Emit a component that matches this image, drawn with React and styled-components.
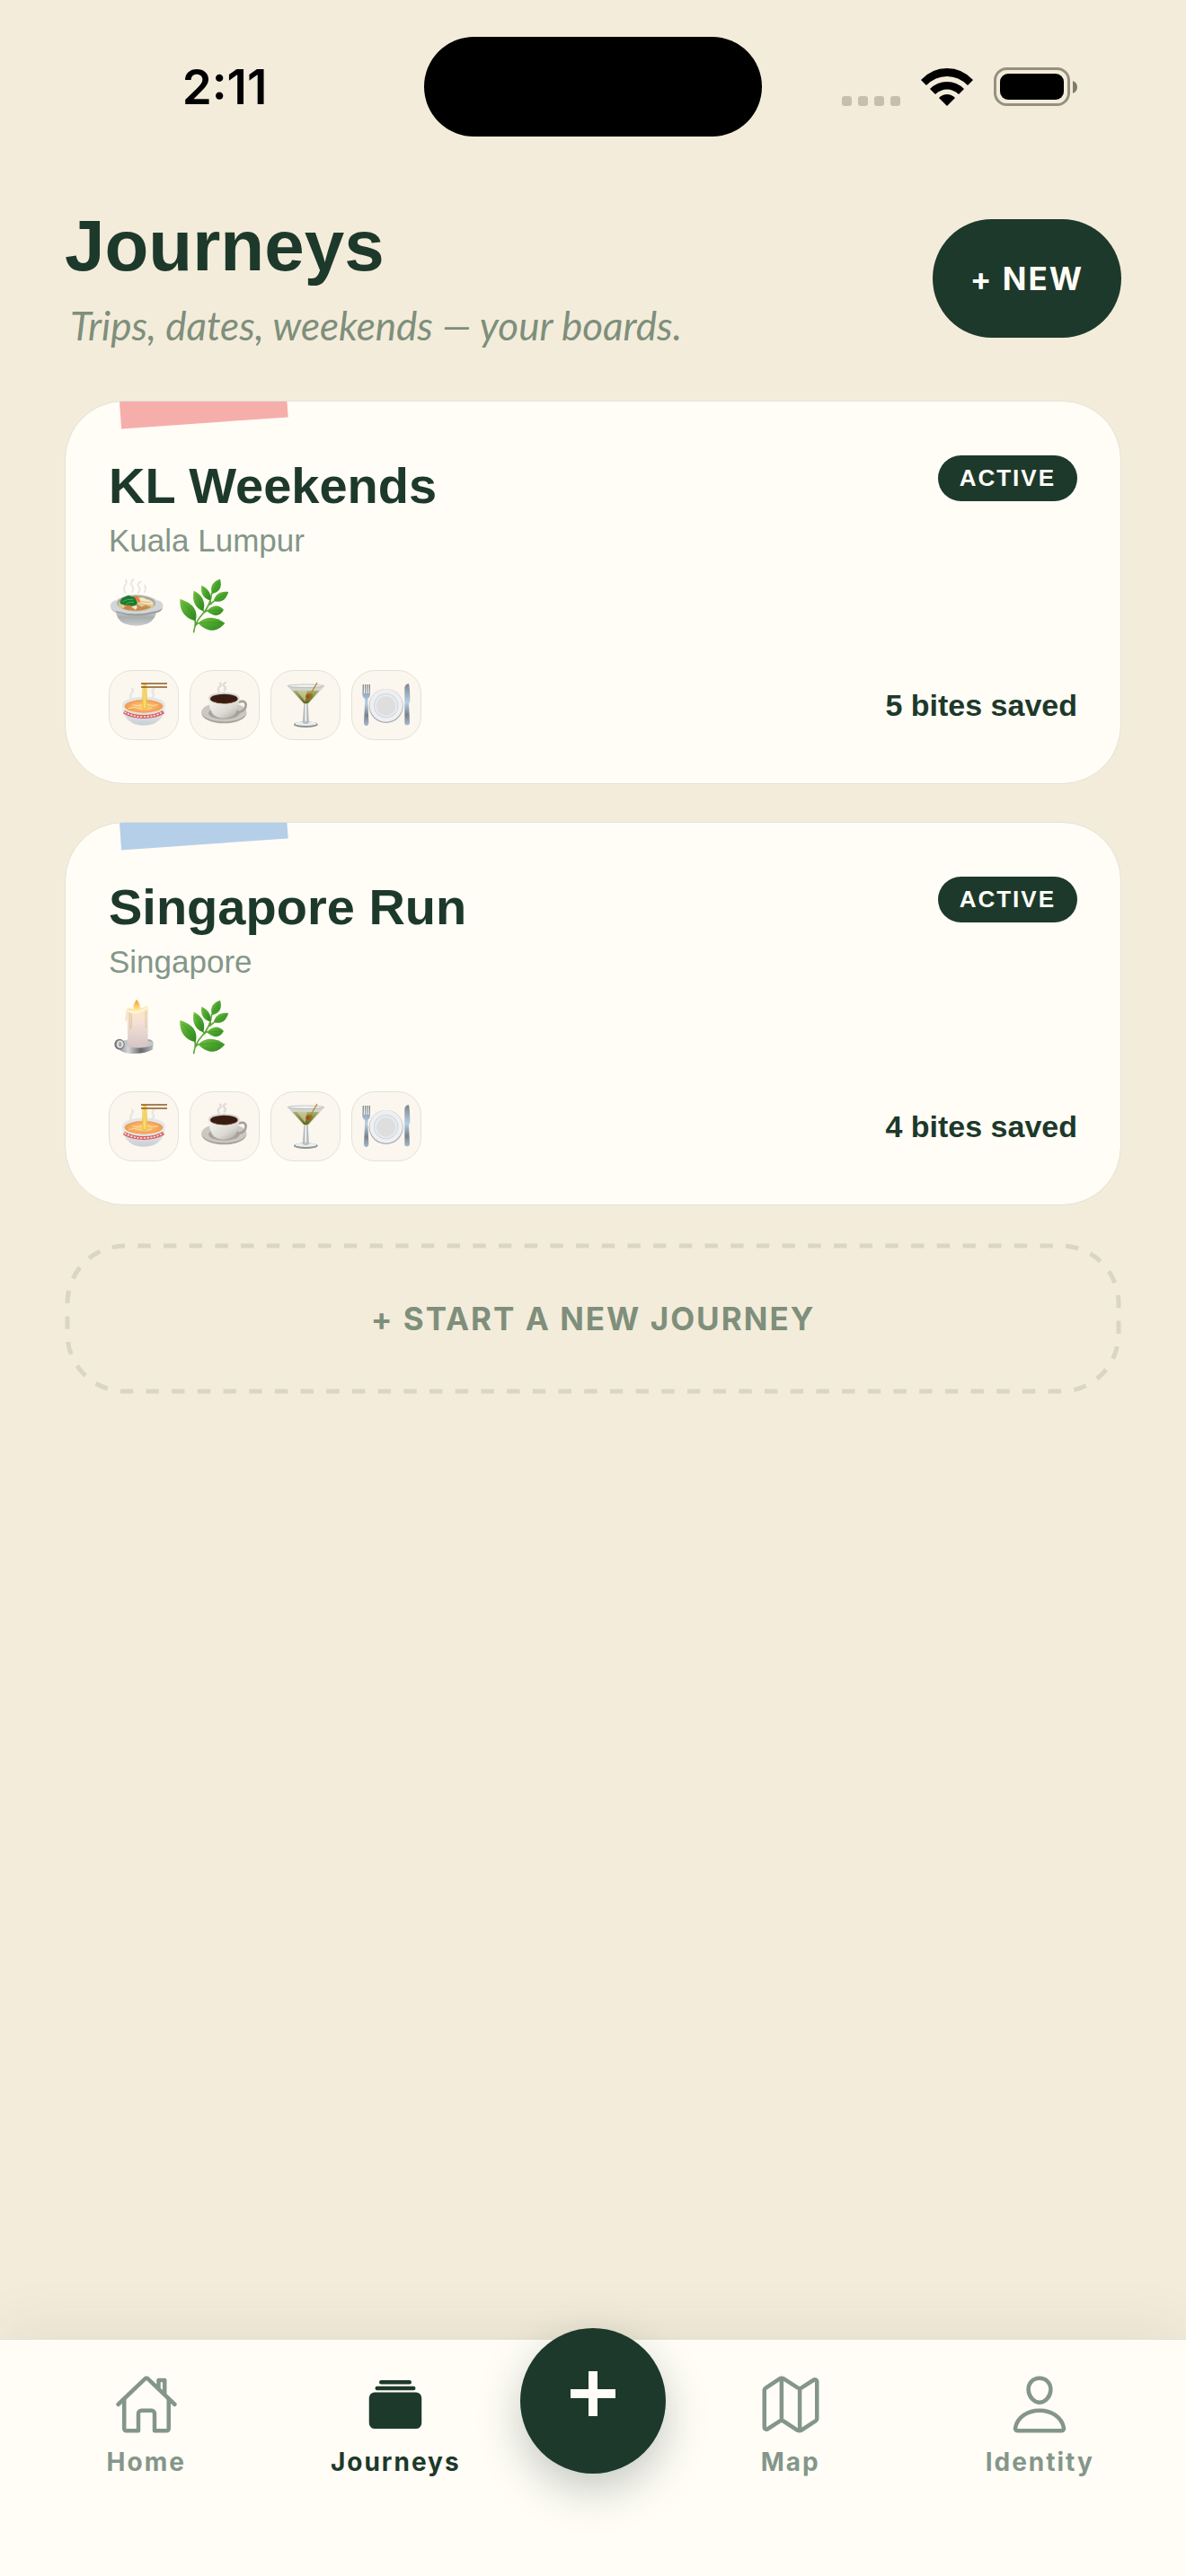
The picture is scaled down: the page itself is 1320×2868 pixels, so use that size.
import React from "react";
import styled, { createGlobalStyle } from "styled-components";
import {
  IoAlbums,
  IoHomeOutline,
  IoMapOutline,
  IoPersonOutline,
} from "react-icons/io5";

const colors = {
  page: "#f4ecda",
  card: "#fffdf6",
  tile: "#fbf7ee",
  line: "#e0e3d8",
  dash: "#d9d6c2",
  green: "#1d392b",
  sage: "#7e8f7c",
  muted: "#84968a",
  pink: "#f6aeab",
  blue: "#b5cfe9",
};

const journeys = [
  {
    title: "KL Weekends",
    place: "Kuala Lumpur",
    tape: colors.pink,
    vibes: ["pot", "herb"],
    bites: 5,
  },
  {
    title: "Singapore Run",
    place: "Singapore",
    tape: colors.blue,
    vibes: ["candle", "herb"],
    bites: 4,
  },
];

const tiles = ["ramen", "coffee", "cocktail", "plate"];

const App = () => {
  return (
    <Screen>
      <GlobalStyle />
      <Gradients />
      <StatusBar />
      <Main>
        <Header>
          <div>
            <Title>Journeys</Title>
            <Tagline>Trips, dates, weekends — your boards.</Tagline>
          </div>
          <NewButton type="button">+ NEW</NewButton>
        </Header>
        <Boards>
          {journeys.map((journey) => (
            <JourneyCard key={journey.title} {...journey} />
          ))}
          <StartButton type="button">
            <DashedFrame aria-hidden="true">
              <rect
                width="100%"
                height="100%"
                rx="64"
                pathLength="178"
                strokeDasharray="1 1"
                strokeDashoffset="-1"
              />
            </DashedFrame>
            + START A NEW JOURNEY
          </StartButton>
        </Boards>
      </Main>
      <TabBar>
        <Tab href="#home">
          <IoHomeOutline />
          Home
        </Tab>
        <Tab href="#journeys" $active aria-current="page">
          <IoAlbums />
          Journeys
        </Tab>
        <AddButton type="button" aria-label="Add">
          <svg width="50" height="50" viewBox="0 0 50 50">
            <path d="M25 0v50M0 25h50" stroke="#fffdf6" strokeWidth="10" />
          </svg>
        </AddButton>
        <Tab href="#map">
          <IoMapOutline />
          Map
        </Tab>
        <Tab href="#identity">
          <IoPersonOutline />
          Identity
        </Tab>
      </TabBar>
    </Screen>
  );
};

export default App;

const StatusBar = () => (
  <Status>
    <Time>2:11</Time>
    <Island />
    <Signals>
      <svg width="65" height="42" viewBox="0 0 65 42" fill="#c7bfae">
        <rect x="0" y="31" width="11" height="11" rx="3" />
        <rect x="18" y="31" width="11" height="11" rx="3" />
        <rect x="36" y="31" width="11" height="11" rx="3" />
        <rect x="54" y="31" width="11" height="11" rx="3" />
      </svg>
      <svg width="58" height="42" viewBox="0 0 58 42">
        <path d="M0 13Q12 0 29 0T58 13L52 19Q42 9 29 9T6 19Z" />
        <path d="M10 23Q18 15 29 15T48 23L42 29Q36 23.500 29 23.500T16 29Z" />
        <path d="M20 33Q24 29 29 29T38 33L29 42Z" />
      </svg>
      <svg width="94" height="44" viewBox="0 0 94 44">
        <rect
          x="1.500"
          y="1.500"
          width="82"
          height="40"
          rx="13"
          fill="none"
          stroke="#95907f"
          strokeWidth="3"
        />
        <rect x="7" y="7" width="71" height="29" rx="9" />
        <path d="M88 15q5 2 5 7t-5 7z" fill="#7f7b6d" />
      </svg>
    </Signals>
  </Status>
);

const JourneyCard = ({ title, place, tape, vibes, bites }) => (
  <Card>
    <Tape $color={tape} />
    <CardTop>
      <div>
        <CardTitle>{title}</CardTitle>
        <Place>{place}</Place>
      </div>
      <Badge>ACTIVE</Badge>
    </CardTop>
    <Vibes>
      {vibes.map((name) => (
        <Drawing key={name} name={name} size={60} box={180} />
      ))}
    </Vibes>
    <CardBottom>
      <Tiles>
        {tiles.map((name) => (
          <Tile key={name}>
            <Drawing name={name} size={54} box={162} />
          </Tile>
        ))}
      </Tiles>
      <Bites>{bites} bites saved</Bites>
    </CardBottom>
  </Card>
);

const Drawing = ({ name, size, box }) => (
  <svg width={size} height={size} viewBox={`0 0 ${box} ${box}`} overflow="visible">
    {drawings[name]}
  </svg>
);

// shared by the food drawings below
const Gradients = () => (
  <HiddenSvg width="0" height="0" aria-hidden="true">
    <defs>
      <linearGradient id="clay" x1="0" y1="0" x2="0" y2="1">
        <stop offset="0" stopColor="#d9dbdb" />
        <stop offset="0.500" stopColor="#a9adad" />
        <stop offset="1" stopColor="#c9cccc" />
      </linearGradient>
      <linearGradient id="leaf" x1="0" y1="0" x2="1" y2="1">
        <stop offset="0" stopColor="#7cc344" />
        <stop offset="0.500" stopColor="#4aa52c" />
        <stop offset="1" stopColor="#2f8422" />
      </linearGradient>
      <linearGradient id="wax" x1="0" y1="0" x2="0" y2="1">
        <stop offset="0" stopColor="#ffe9b8" />
        <stop offset="0.350" stopColor="#f6e2d6" />
        <stop offset="1" stopColor="#d5c5c6" />
      </linearGradient>
      <linearGradient id="flame" x1="0" y1="0" x2="0" y2="1">
        <stop offset="0" stopColor="#f59a23" />
        <stop offset="1" stopColor="#fff3a0" />
      </linearGradient>
      <linearGradient id="metal" x1="0" y1="0" x2="1" y2="0">
        <stop offset="0" stopColor="#8d8f92" />
        <stop offset="0.300" stopColor="#d4d6d8" />
        <stop offset="0.650" stopColor="#66686b" />
        <stop offset="1" stopColor="#b9bbbd" />
      </linearGradient>
      <linearGradient id="china" x1="0" y1="0" x2="1" y2="1">
        <stop offset="0" stopColor="#f7f6f2" />
        <stop offset="0.600" stopColor="#dddad4" />
        <stop offset="1" stopColor="#a8a49d" />
      </linearGradient>
      <linearGradient id="bowl" x1="0" y1="0" x2="0" y2="1">
        <stop offset="0" stopColor="#eef1f4" />
        <stop offset="1" stopColor="#c9ced4" />
      </linearGradient>
      <radialGradient id="broth">
        <stop offset="0" stopColor="#ffcf8a" />
        <stop offset="1" stopColor="#f29a4a" />
      </radialGradient>
      <linearGradient id="steel" x1="0" y1="0" x2="0" y2="1">
        <stop offset="0" stopColor="#7f858b" />
        <stop offset="0.450" stopColor="#b4cfe8" />
        <stop offset="0.750" stopColor="#7b8188" />
        <stop offset="1" stopColor="#a5bbd0" />
      </linearGradient>
      <linearGradient id="olive" x1="0" y1="0" x2="0" y2="1">
        <stop offset="0" stopColor="#aeb070" />
        <stop offset="1" stopColor="#5c6212" />
      </linearGradient>
    </defs>
  </HiddenSvg>
);

const drawings = {
  pot: (
    <>
      <path
        d="M55 50q-8-14 0-24t2-18M78 48q8-10 0-20t4-22M98 52q10-12 2-22t8-16M120 48q6-12 0-22"
        fill="none"
        stroke="#dededc"
        strokeWidth="6"
        strokeLinecap="round"
        opacity="0.700"
      />
      <path d="M22 104q2 36 30 50q40 14 78 0q28-14 32-50z" fill="url(#clay)" />
      <path
        d="M5 94q2-14 20-18q28-20 68-20t68 20q18 2 21 18q0 12-24 18q-66 20-130 0Q5 106 5 94Z"
        fill="#d3d6d6"
      />
      <path d="M8 100q4 12 24 14q60 16 126-2q18-4 22-12q0 14-22 18q-64 20-128 0q-22-6-22-18Z" fill="#999e9e" />
      <ellipse cx="92" cy="86" rx="64" ry="26" fill="#a5a19a" />
      <ellipse cx="92" cy="89" rx="60" ry="23" fill="#dccb9a" />
      <path d="M46 104l20-12 20 4 10-6 14 8 14-6 18 8q-44 20-96 4Z" fill="#c98a4c" />
      <path d="M76 98l12-8 8 8-6 10Z" fill="#f3e6cb" />
      <path
        d="M38 82q4-16 18-18q10-8 20 0q16 0 17 14q6 8-2 14q-12 6-24 0q-14 4-18-2q-12 0-11-8Z"
        fill="#1d7a31"
      />
      <path d="M46 82q14-12 36-8M56 90q10-10 28-8" fill="none" stroke="#4fae55" strokeWidth="3" />
      <path d="M84 64l8-4 16 18-8 6Z" fill="#ee7a2e" />
      <path d="M102 70q12-8 24 4q12 0 22 12q-10 8-24 2q-16 4-22-18Z" fill="#f5e8c2" />
      <path d="M108 80l32 4M112 90l30 4" stroke="#d3ba7d" strokeWidth="3" />
      <path d="M50 100l14-8 8 6-8 8Z" fill="#e07a3a" />
    </>
  ),
  herb: (
    <>
      <path
        d="M56 182Q60 150 82 126Q112 94 116 52M60 144q2 8 0 16M86 108l6 8M110 74l2 8M122 80l-12 10M101 110l-12 8M70 152l-8 8"
        fill="none"
        stroke="#5da43a"
        strokeWidth="5"
        strokeLinecap="round"
      />
      <g fill="url(#leaf)">
        <path d="M10 72C50 84 72 108 62 145C26 136 8 112 10 72Z" />
        <path d="M56 44C84 56 98 84 87 112C58 100 50 76 56 44Z" />
        <path d="M82 26C106 38 116 56 111 76C86 70 78 50 82 26Z" />
        <path d="M144 5C152 32 142 48 117 54C108 28 122 12 144 5Z" />
        <path d="M172 48C162 78 146 84 122 79C128 54 146 44 172 48Z" />
        <path d="M156 108C142 132 122 132 99 112C118 90 140 88 156 108Z" />
        <path d="M160 152C132 186 100 182 70 152C98 126 130 130 160 152Z" />
      </g>
      <path
        d="M18 84q28 24 42 56M60 54q18 24 26 52M86 34q16 18 24 38M140 14q-14 20-21 36M164 54q-20 8-38 23M150 110q-24-2-48 2M150 152q-40-6-76 0"
        fill="none"
        stroke="#2f8422"
        strokeWidth="2"
        opacity="0.600"
      />
    </>
  ),
  candle: (
    <>
      <path d="M30 150q20-14 46-14h56q18 0 17 16l-3 18q-30 16-80 12q-38-4-36-32Z" fill="url(#metal)" />
      <ellipse cx="100" cy="150" rx="48" ry="14" fill="#c6c6c8" />
      <path
        d="M58 42q0-10 12-12l12 4 16-6 16 2 12-6q8 2 6 16l-2 116q-34 12-66 0l-2-90q-4 18-7 4Z"
        fill="url(#wax)"
      />
      <path d="M70 36v54q2 20 6 0v-40M124 40v56" fill="none" stroke="#e3c9a8" strokeWidth="4" />
      <path d="M64 40q30 14 62-8" fill="none" stroke="#fff5d8" strokeWidth="6" strokeLinecap="round" />
      <path d="M93 2q18 22 8 36q-8 6-16 0q-8-12 8-36Z" fill="url(#flame)" />
      <ellipse cx="36" cy="152" rx="17" ry="18" fill="#77787c" />
      <ellipse cx="38" cy="152" rx="12" ry="13" fill="#dedee0" />
      <ellipse cx="38" cy="152" rx="5" ry="8" fill="#a4a5a8" />
    </>
  ),
  ramen: (
    <>
      <path
        d="M44 66q-12-14-4-24t2-16M106 60q12-10 6-20t4-14"
        fill="none"
        stroke="#dddbd7"
        strokeWidth="7"
        strokeLinecap="round"
        opacity="0.600"
      />
      <path d="M9 82q0 44 40 62q32 10 64 0q40-18 40-62Z" fill="url(#bowl)" />
      <ellipse cx="81" cy="80" rx="72" ry="27" fill="#e3e6e9" />
      <ellipse cx="81" cy="85" rx="64" ry="22" fill="url(#broth)" />
      <path d="M30 92q20-8 38 0t40-2M44 80q18 6 32 0M92 78q16 8 36 2" fill="none" stroke="#fbe0a0" strokeWidth="3" />
      <path
        d="M15 104q26 16 66 16t66-16"
        fill="none"
        stroke="#dd5a5c"
        strokeWidth="12"
      />
      <path d="M17 104q26 16 64 16t64-16" fill="none" stroke="#f6dfdc" strokeWidth="5" strokeDasharray="7 4" />
      <path d="M77 8h14l2 84q-9 8-18 0Z" fill="#efc441" />
      <path d="M80 12l2 78M87 12l-1 78" stroke="#fbe487" strokeWidth="3" />
      <path d="M72 9h87M72 21h87" stroke="#8d5a22" strokeWidth="5" />
    </>
  ),
  coffee: (
    <>
      <path
        d="M62 36q-6-10 2-16t2-12M80 32q8-8 0-14t4-12"
        fill="none"
        stroke="#d8d6d2"
        strokeWidth="7"
        strokeLinecap="round"
        opacity="0.800"
      />
      <ellipse cx="79" cy="108" rx="75" ry="34" fill="#a9a59e" />
      <ellipse cx="79" cy="104" rx="75" ry="32" fill="#cbc8c1" />
      <ellipse cx="79" cy="108" rx="52" ry="20" fill="#a8a49c" />
      <path d="M126 72q24-10 26 8q0 22-32 26" fill="none" stroke="#a5a19a" strokeWidth="8" />
      <path d="M27 58q2 44 20 58q30 18 62 0q20-14 22-58Z" fill="url(#china)" />
      <ellipse cx="79" cy="58" rx="52" ry="20" fill="#dad8d2" />
      <ellipse cx="79" cy="60" rx="46" ry="16" fill="#3a1d12" />
      <path d="M40 66q38 18 78 0q-10 10-39 10t-39-10Z" fill="#7a4a30" />
    </>
  ),
  cocktail: (
    <>
      <ellipse cx="82" cy="146" rx="40" ry="10" fill="#8f9393" />
      <ellipse cx="82" cy="143" rx="36" ry="7" fill="#eceeee" />
      <path d="M76 74h13l4 66q-11 8-22 0Z" fill="#b9bdbd" />
      <path d="M82 78v58" stroke="#fff" strokeWidth="4" />
      <path d="M21 17h123L92 76q-9 6-18 0Z" fill="#d0d3cf" />
      <path d="M38 33h89L90 74q-8 4-15 0Z" fill="url(#olive)" />
      <path d="M52 33l28 36 6-36Z" fill="#d9dcae" opacity="0.600" />
      <ellipse cx="82" cy="17" rx="61" ry="5" fill="#f4f5f4" stroke="#a9acab" strokeWidth="2" />
      <path d="M120 6L92 54" stroke="#b98732" strokeWidth="4" />
      <ellipse cx="93" cy="52" rx="11" ry="10" fill="#7d7f1d" />
      <circle cx="89" cy="53" r="6" fill="#c43b22" />
    </>
  ),
  plate: (
    <>
      <circle cx="80" cy="84" r="57" fill="#a9acb2" />
      <circle cx="80" cy="82" r="55" fill="#efeff1" />
      <circle cx="80" cy="83" r="41" fill="#c9d6e4" />
      <circle cx="80" cy="83" r="38" fill="#ebebec" />
      <circle cx="80" cy="84" r="32" fill="#dededf" />
      <path
        d="M2 12h4v30h3V12h4v30h3V12h4v30h3V12h4v34q0 10-8 14l3 80q-1 10-8 10t-8-10l4-80Q1 56 1 46Z"
        fill="url(#steel)"
      />
      <path d="M142 76V22q4-14 14-12q4 12 4 60l-4 6 3 64q-1 8-9 8t-8-8Z" fill="url(#steel)" />
    </>
  ),
};

const GlobalStyle = createGlobalStyle`
  * {
    box-sizing: border-box;
  }

  body {
    margin: 0;
    background: ${colors.page};
    font-family: "Liberation Sans", Arial, sans-serif;
    color: ${colors.green};
  }

  h1, h2, p {
    margin: 0;
  }

  button {
    border: 0;
    padding: 0;
    font-family: inherit;
    cursor: pointer;
  }

  svg {
    display: block;
    flex-shrink: 0;
  }
`;

const HiddenSvg = styled("svg")`
  position: absolute;
`;

const Screen = styled("div")`
  min-height: 100vh;
  display: flex;
  flex-direction: column;
`;

// status bar styles

const Status = styled("div")`
  display: grid;
  grid-template-columns: 1fr auto 1fr;
  align-items: center;
  padding: 41px 0 0;
`;

const Time = styled("span")`
  padding-left: 28px;
  text-align: center;
  font-family: Inter, sans-serif;
  font-size: 53px;
  font-weight: 600;
  line-height: 60px;
  color: #000;
`;

const Island = styled("div")`
  width: 376px;
  height: 111px;
  border-radius: 56px;
  background: #000;
`;

const Signals = styled("div")`
  display: flex;
  justify-content: center;
  align-items: center;
  gap: 23px;
  padding-right: 32px;
`;

// header styles

const Main = styled("main")`
  flex: 1;
  padding: 80px 72px 60px;
`;

const Header = styled("header")`
  display: flex;
  justify-content: space-between;
  align-items: center;
`;

const Title = styled("h1")`
  font-size: 80px;
  font-weight: bold;
  line-height: 84px;
`;

const Tagline = styled("p")`
  margin-top: 20px;
  padding-left: 6px;
  font-family: Lato, sans-serif;
  font-size: 44px;
  font-style: italic;
  line-height: 52px;
  color: ${colors.sage};
`;

const NewButton = styled("button")`
  height: 132px;
  padding: 0 42px;
  border-radius: 66px;
  background: ${colors.green};
  color: ${colors.card};
  font-family: Inter, sans-serif;
  font-size: 35px;
  font-weight: 700;
  letter-spacing: 2px;
`;

// board styles

const Boards = styled("section")`
  display: flex;
  flex-direction: column;
  gap: 42px;
  margin-top: 58px;
`;

const Card = styled("article")`
  position: relative;
  overflow: hidden;
  padding: 60px 48px 48px;
  border: 1px solid ${colors.line};
  border-radius: 66px;
  background: ${colors.card};
`;

const Tape = styled("div")`
  position: absolute;
  top: -30px;
  left: 60px;
  width: 186px;
  height: 54px;
  background: ${(props) => props.$color};
  transform: rotate(-4deg);
`;

const CardTop = styled("div")`
  display: flex;
  justify-content: space-between;
  align-items: flex-start;
`;

const CardTitle = styled("h2")`
  font-size: 56px;
  font-weight: bold;
  line-height: 68px;
`;

const Place = styled("p")`
  margin-top: 4px;
  font-size: 35px;
  line-height: 46px;
  color: ${colors.muted};
`;

const Badge = styled("span")`
  padding: 0 24px;
  border-radius: 26px;
  background: ${colors.green};
  color: ${colors.card};
  font-size: 26px;
  font-weight: bold;
  line-height: 51px;
  letter-spacing: 2px;
`;

const Vibes = styled("div")`
  display: flex;
  gap: 16px;
  margin-top: 18px;
`;

const CardBottom = styled("div")`
  display: flex;
  justify-content: space-between;
  align-items: center;
  margin-top: 43px;
`;

const Tiles = styled("div")`
  display: flex;
  gap: 12px;
`;

const Tile = styled("div")`
  display: flex;
  justify-content: center;
  align-items: center;
  width: 78px;
  height: 78px;
  border: 1px solid ${colors.line};
  border-radius: 26px;
  background: ${colors.tile};
`;

const Bites = styled("span")`
  font-size: 34px;
  font-weight: bold;
`;

const StartButton = styled("button")`
  position: relative;
  height: 168px;
  background: none;
  color: ${colors.sage};
  font-family: Inter, sans-serif;
  font-size: 35px;
  font-weight: 700;
  letter-spacing: 2px;
`;

const DashedFrame = styled("svg")`
  position: absolute;
  inset: 3px;
  width: calc(100% - 6px);
  height: calc(100% - 6px);
  overflow: visible;
  fill: none;
  stroke: ${colors.dash};
  stroke-width: 5px;
`;

// tab bar styles

const TabBar = styled("nav")`
  display: flex;
  align-items: flex-start;
  height: 264px;
  padding: 36px 24px 0;
  border-top: 1px solid ${colors.line};
  background: ${colors.card};
  box-shadow: 0 -12px 60px rgba(29, 57, 43, 0.07);
`;

const Tab = styled("a")`
  flex: 1;
  display: flex;
  flex-direction: column;
  align-items: center;
  gap: 10px;
  color: ${(props) => (props.$active ? colors.green : colors.muted)};
  font-family: Inter, sans-serif;
  font-size: 28px;
  font-weight: 700;
  line-height: 36px;
  letter-spacing: 2px;
  text-decoration: none;

  svg {
    width: 72px;
    height: 72px;
  }
`;

const AddButton = styled("button")`
  display: flex;
  justify-content: center;
  align-items: center;
  width: 162px;
  height: 162px;
  margin-top: -49px;
  padding-bottom: 16px;
  border-radius: 50%;
  background: ${colors.green};
  box-shadow: 0 18px 48px rgba(29, 57, 43, 0.25);
`;
